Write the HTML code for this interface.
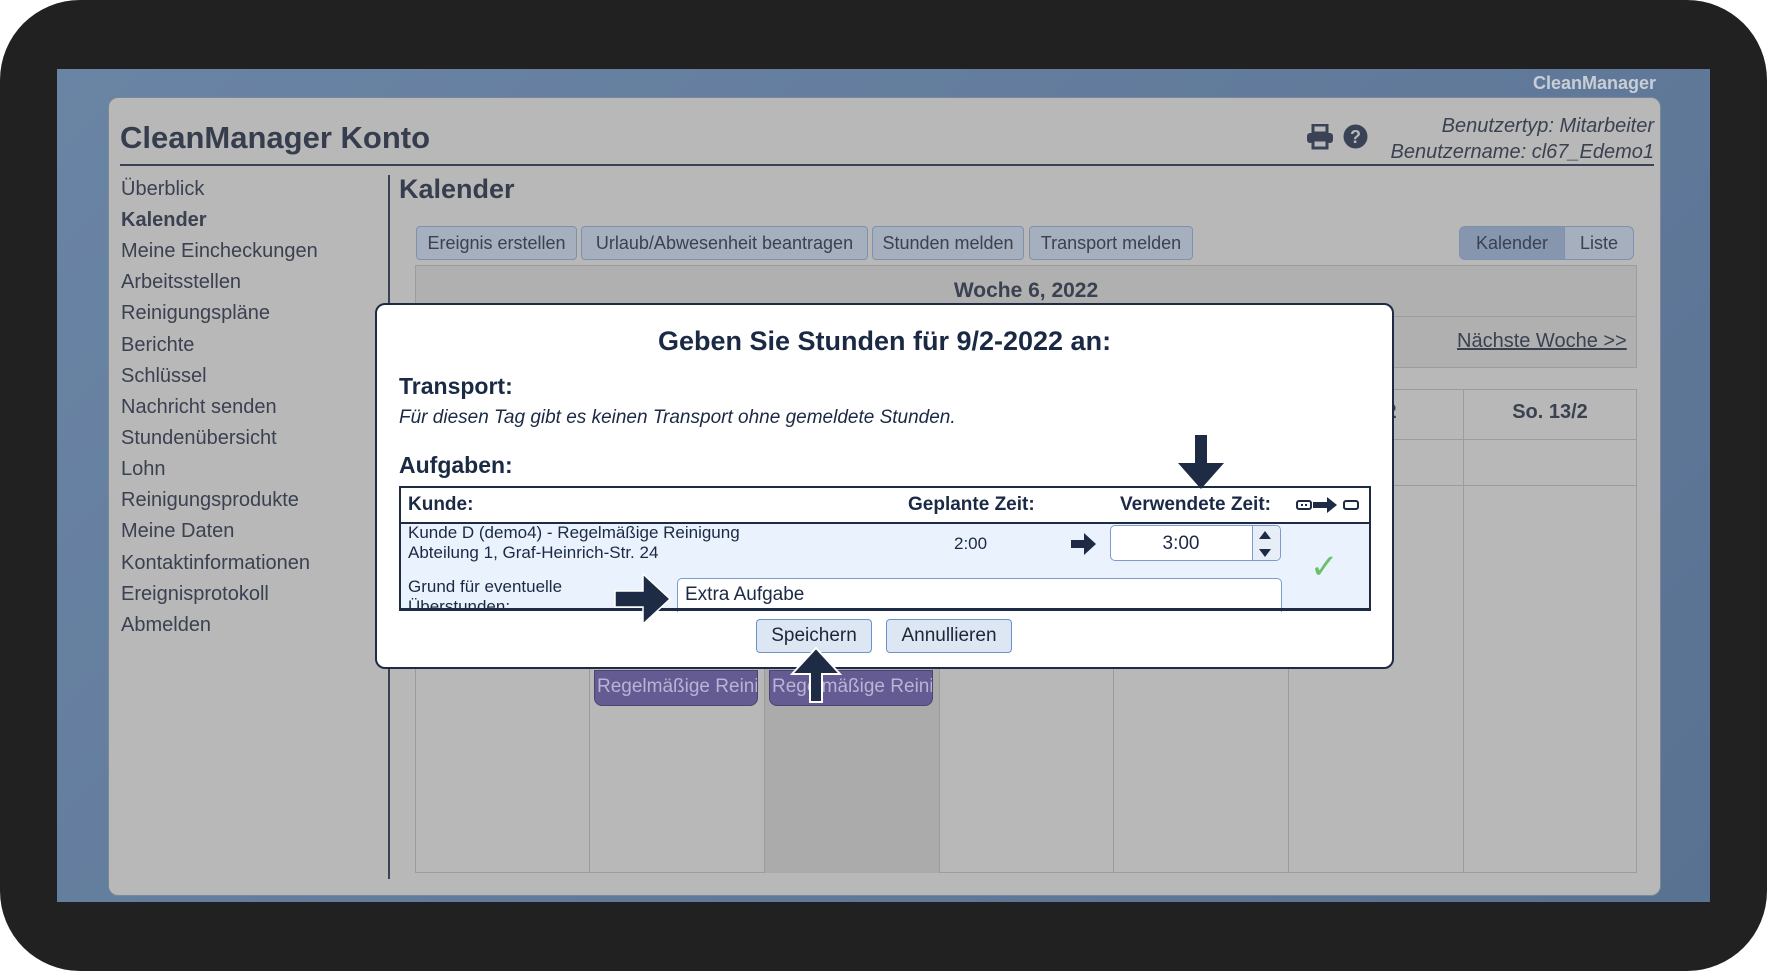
<!DOCTYPE html>
<html><head><meta charset="utf-8"><style>
*{margin:0;padding:0;box-sizing:border-box}
body{width:1767px;height:971px;background:#fff;font-family:"Liberation Sans",Arial,sans-serif;position:relative;overflow:hidden}
.a{position:absolute;white-space:nowrap}
#frame{position:absolute;left:0;top:0;width:1767px;height:971px;background:#222122;border-radius:80px}
#blue{position:absolute;left:57px;top:69px;width:1653px;height:833px;background:linear-gradient(135deg,#6a84a5,#5a7292)}
#panel{position:absolute;left:108px;top:97px;width:1553px;height:799px;background:#b8b8b8;border-radius:10px;border:1px solid #7a8798}
.nav{position:absolute;left:121px;font-size:20px;color:#3a4150}
.btn{position:absolute;top:226px;height:34px;border:1px solid #7e92ad;border-radius:4px;background:#a6afbd;font-size:18px;color:#3a4150;text-align:center;line-height:32px}
.cell{position:absolute;border:1px solid #9c9c9c}
.ev{position:absolute;top:670px;height:36px;background:#655b93;border:1px solid #4a4470;border-radius:0 0 8px 8px;color:#b9b3d6;font-size:19px;line-height:32px;padding-left:2px;overflow:hidden;white-space:nowrap}
#modal{position:absolute;left:375px;top:303px;width:1019px;height:366px;background:#fff;border:2px solid #1d2b44;border-radius:10px}
.mb{position:absolute;top:619px;height:34px;border:1px solid #6d93c9;border-radius:4px;background:#dde7f3;font-size:19px;color:#1d2638;text-align:center;line-height:32px}
</style></head><body>
<div id="frame"></div>
<div id="blue"></div>
<div class="a" style="left:1533px;top:73px;font-size:18px;font-weight:bold;color:#c9ced6">CleanManager</div>
<div id="panel"></div>
<div class="a" style="left:120px;top:120px;font-size:31px;font-weight:bold;color:#363e4e">CleanManager Konto</div>
<div class="a" style="left:120px;top:164px;width:1534px;height:2px;background:#3a4356"></div>
<svg class="a" style="left:1306px;top:124px" width="28" height="26" viewBox="0 0 28 26"><rect x="7" y="1" width="14" height="8" fill="none" stroke="#3a4356" stroke-width="3"/><rect x="1" y="9" width="26" height="10" rx="3" fill="#3a4356"/><rect x="7" y="16" width="14" height="8" fill="#b8b8b8" stroke="#3a4356" stroke-width="3"/></svg>
<svg class="a" style="left:1343px;top:124px" width="25" height="25" viewBox="0 0 25 25"><circle cx="12.5" cy="12.5" r="12" fill="#3a4356"/><text x="12.5" y="19" font-size="18" font-weight="bold" fill="#b8b8b8" text-anchor="middle" font-family="Liberation Sans">?</text></svg>
<div class="a" style="right:113px;top:113px;font-size:20px;font-style:italic;color:#3a4150;text-align:right;line-height:26px">Benutzertyp: Mitarbeiter<br>Benutzername: cl67_Edemo1</div>
<div class="a" style="left:1380px;top:164px;width:274px;height:2px;background:#3a4356"></div>
<div class="nav" style="top:178px">Überblick</div>
<div class="nav" style="top:209px;font-weight:bold">Kalender</div>
<div class="nav" style="top:240px">Meine Eincheckungen</div>
<div class="nav" style="top:271px">Arbeitsstellen</div>
<div class="nav" style="top:302px">Reinigungspläne</div>
<div class="nav" style="top:334px">Berichte</div>
<div class="nav" style="top:365px">Schlüssel</div>
<div class="nav" style="top:396px">Nachricht senden</div>
<div class="nav" style="top:427px">Stundenübersicht</div>
<div class="nav" style="top:458px">Lohn</div>
<div class="nav" style="top:489px">Reinigungsprodukte</div>
<div class="nav" style="top:520px">Meine Daten</div>
<div class="nav" style="top:552px">Kontaktinformationen</div>
<div class="nav" style="top:583px">Ereignisprotokoll</div>
<div class="nav" style="top:614px">Abmelden</div>
<div class="a" style="left:388px;top:175px;width:2px;height:704px;background:#3a4356"></div>
<div class="a" style="left:399px;top:174px;font-size:27px;font-weight:bold;color:#363e4e">Kalender</div>
<div class="btn" style="left:416px;width:161px">Ereignis erstellen</div>
<div class="btn" style="left:581px;width:287px">Urlaub/Abwesenheit beantragen</div>
<div class="btn" style="left:872px;width:152px">Stunden melden</div>
<div class="btn" style="left:1029px;width:164px">Transport melden</div>
<div class="btn" style="left:1459px;width:106px;background:#8596ae;border-radius:6px 0 0 6px">Kalender</div>
<div class="btn" style="left:1564px;width:70px;border-radius:0 6px 6px 0">Liste</div>
<div class="cell" style="left:415px;top:265px;width:1222px;height:52px;background:#b0b0b0"></div>
<div class="a" style="left:415px;top:279px;width:1222px;text-align:center;font-size:21px;font-weight:bold;color:#3a4150">Woche 6, 2022</div>
<div class="cell" style="left:415px;top:316px;width:1222px;height:52px;background:#b0b0b0"></div>
<div class="a" style="left:1457px;top:330px;font-size:20px;color:#3a4150;text-decoration:underline">Nächste Woche &gt;&gt;</div>
<div class="cell" style="left:415px;top:389px;width:1222px;height:484px"></div>
<div class="a" style="left:764px;top:485px;width:175px;height:388px;background:#ababab"></div>
<div class="a" style="left:415px;top:439px;width:1222px;height:1px;background:#9c9c9c"></div>
<div class="a" style="left:415px;top:485px;width:1222px;height:1px;background:#9c9c9c"></div>
<div class="a" style="left:589px;top:389px;width:1px;height:484px;background:#9c9c9c"></div>
<div class="a" style="left:764px;top:389px;width:1px;height:484px;background:#9c9c9c"></div>
<div class="a" style="left:939px;top:389px;width:1px;height:484px;background:#9c9c9c"></div>
<div class="a" style="left:1113px;top:389px;width:1px;height:484px;background:#9c9c9c"></div>
<div class="a" style="left:1288px;top:389px;width:1px;height:484px;background:#9c9c9c"></div>
<div class="a" style="left:1463px;top:389px;width:1px;height:484px;background:#9c9c9c"></div>
<div class="a" style="left:1380px;top:401px;font-size:20px;font-weight:bold;color:#3a4150">/2</div>
<div class="a" style="left:1463px;top:401px;width:174px;text-align:center;font-size:20px;font-weight:bold;color:#3a4150">So. 13/2</div>
<div class="ev" style="left:594px;width:164px">Regelmäßige Reinigung</div>
<div class="ev" style="left:769px;width:164px">Regelmäßige Reinigung</div>
<div id="modal"></div>
<div class="a" style="left:375px;top:326px;width:1019px;text-align:center;font-size:27px;font-weight:bold;color:#1b2a44">Geben Sie Stunden für 9/2-2022 an:</div>
<div class="a" style="left:399px;top:373px;font-size:23px;font-weight:bold;color:#1b2a44">Transport:</div>
<div class="a" style="left:399px;top:407px;font-size:19px;font-style:italic;color:#1b2a44">Für diesen Tag gibt es keinen Transport ohne gemeldete Stunden.</div>
<div class="a" style="left:399px;top:452px;font-size:23px;font-weight:bold;color:#1b2a44">Aufgaben:</div>
<div class="a" style="left:399px;top:486px;width:972px;height:124px;border:2px solid #1d2b44;background:#eaf2fd;overflow:hidden">
 <div class="a" style="left:0;top:0;width:970px;height:36px;background:#fff;border-bottom:2px solid #1d2b44"></div>
</div>
<div class="a" style="left:408px;top:494px;font-size:19px;font-weight:bold;color:#1b2a44">Kunde:</div>
<div class="a" style="left:908px;top:494px;font-size:19px;font-weight:bold;color:#1b2a44">Geplante Zeit:</div>
<div class="a" style="left:1120px;top:494px;font-size:19px;font-weight:bold;color:#1b2a44">Verwendete Zeit:</div>
<svg class="a" style="left:1296px;top:495px" width="64" height="20" viewBox="0 0 64 20"><rect x="1" y="6" width="14" height="8" rx="2" fill="none" stroke="#1d2b44" stroke-width="2"/><rect x="5" y="9" width="2" height="2" fill="#1d2b44"/><rect x="9" y="9" width="2" height="2" fill="#1d2b44"/><path d="M17 7h14V2l10 8-10 8v-5H17z" fill="#1d2b44"/><rect x="48" y="6" width="14" height="8" rx="2" fill="none" stroke="#1d2b44" stroke-width="2"/></svg>
<div class="a" style="left:408px;top:523px;font-size:17px;color:#1b2a44;line-height:20px">Kunde D (demo4) - Regelmäßige Reinigung<br>Abteilung 1, Graf-Heinrich-Str. 24</div>
<div class="a" style="left:954px;top:534px;font-size:17px;color:#1b2a44">2:00</div>
<svg class="a" style="left:1071px;top:533px" width="26" height="22" viewBox="0 0 26 22"><path d="M0 7h13V0l12 11-12 11v-7H0z" fill="#1d2b44"/></svg>
<div class="a" style="left:1110px;top:525px;width:171px;height:36px;border:1px solid #7b9ccd;border-radius:5px;background:#fff"></div>
<div class="a" style="left:1110px;top:533px;width:142px;text-align:center;font-size:19px;color:#1b2a44">3:00</div>
<div class="a" style="left:1252px;top:526px;width:28px;height:34px;border-left:1px solid #7b9ccd;background:#e8eef7;border-radius:0 5px 5px 0"></div>
<div class="a" style="left:1259px;top:531px;width:0;height:0;border:6px solid transparent;border-bottom:8px solid #1d2b44;border-top:0"></div>
<div class="a" style="left:1259px;top:549px;width:0;height:0;border:6px solid transparent;border-top:8px solid #1d2b44;border-bottom:0"></div>
<div class="a" style="left:1310px;top:547px;font-size:34px;color:#6cc06c">✓</div>
<div class="a" style="left:408px;top:577px;font-size:17px;color:#1b2a44;line-height:20px;height:32px;overflow:hidden">Grund für eventuelle<br>Überstunden:</div>
<div class="a" style="left:677px;top:578px;width:605px;height:34px;border:1px solid #7b9ccd;border-radius:5px 5px 0 0;background:#fff;border-bottom:none"></div>
<div class="a" style="left:685px;top:584px;font-size:19px;color:#1b2a44">Extra Aufgabe</div>
<div class="a" style="left:399px;top:608px;width:972px;height:3px;background:#1d2b44"></div>
<svg class="a" style="left:614px;top:573px" width="58" height="52" viewBox="0 0 58 52"><path d="M1 18h28V1l27 25-27 25V34H1z" fill="#1d2b44" stroke="#fff" stroke-width="1.5"/></svg>
<svg class="a" style="left:1176px;top:434px" width="50" height="56" viewBox="0 0 50 56"><path d="M19 1h12v28h17L25 55 2 29h17z" fill="#1d2b44"/></svg>
<div class="mb" style="left:756px;width:116px">Speichern</div>
<div class="mb" style="left:886px;width:126px">Annullieren</div>
<svg class="a" style="left:790px;top:647px" width="52" height="56" viewBox="0 0 52 56"><path d="M20 55V27H2L26 1l24 26H32v28z" fill="#1d2b44" stroke="#fff" stroke-width="2"/></svg>
</body></html>
